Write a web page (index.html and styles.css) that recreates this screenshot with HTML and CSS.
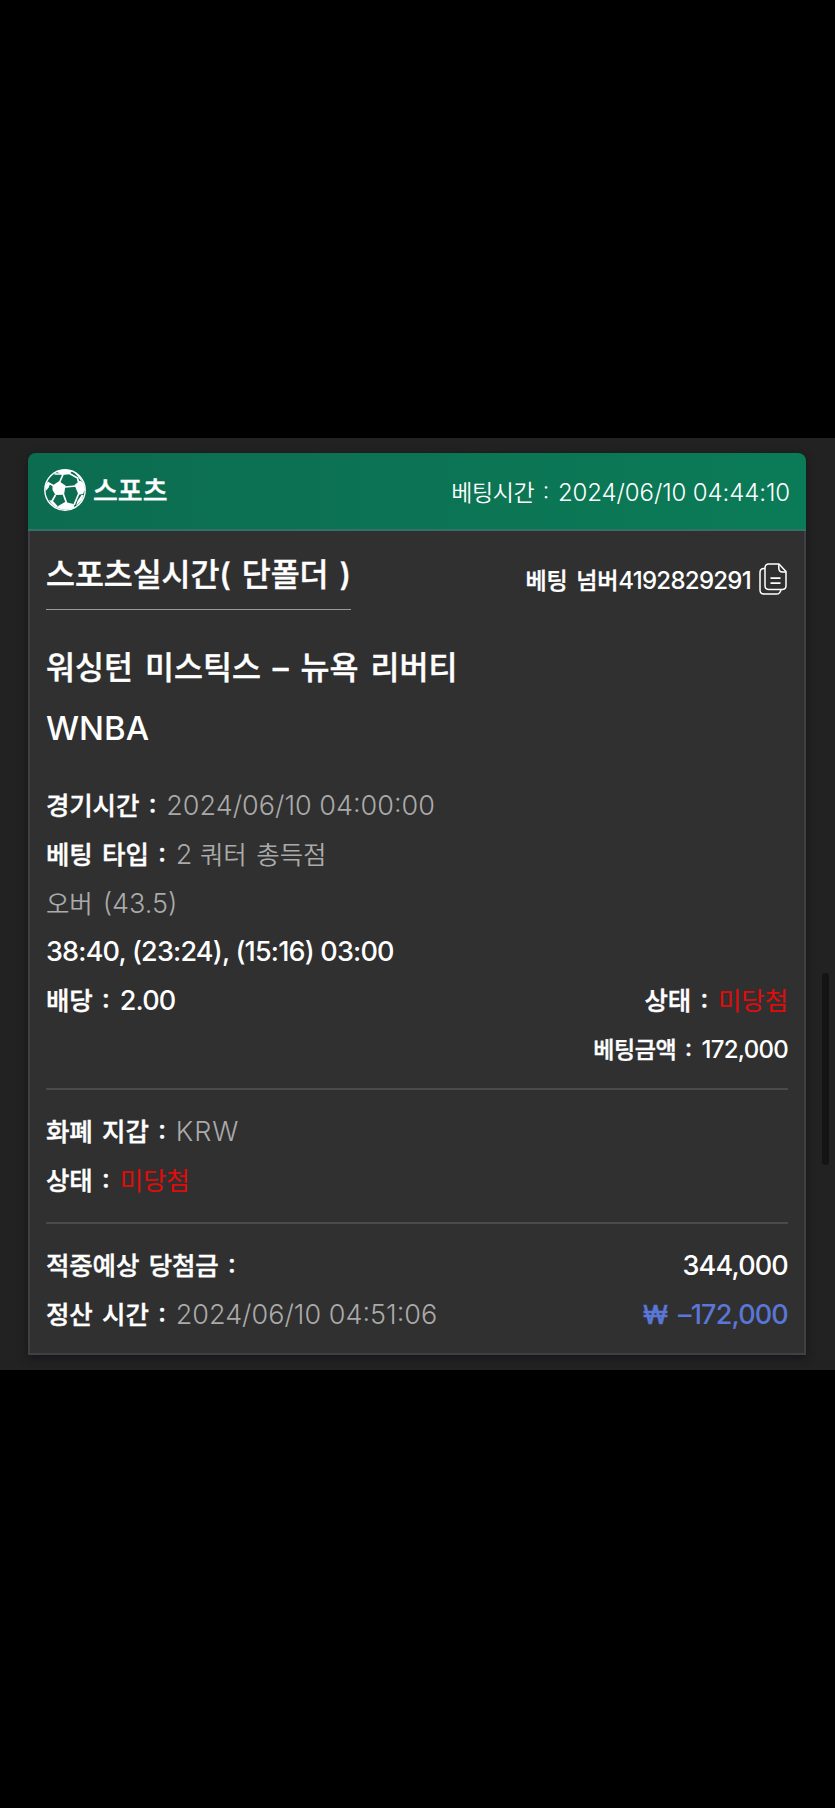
FILE: index.html
```
<!DOCTYPE html>
<html lang="ko">
<head>
<meta charset="utf-8">
<title>스포츠</title>
<link rel="stylesheet" href="styles.css">
</head>
<body>
<main class="sheet">
  <article class="card">
    <header class="head">
      <svg class="ball" viewBox="0 0 42 42">
        <circle cx="21" cy="21" r="20.200" fill="none" stroke="#fff" stroke-width="1.400"/>
        <g fill="#fff">
          <path d="M8.500 16.500l6.500-4.200 6.500 4.200-1.500 9.300-8.500.2-3-5z"/>
          <path d="M12 2.500Q20-1 28 2l-2.500 3.200-7 .8z"/>
          <path d="M30.500 16l5.500-4.500 3.500 2 1.500 7-2 4.500-4.500.7z"/>
          <path d="M1 16l3-3.500 2.200 2-1.500 4-3 3.500z"/>
          <path d="M5 31l4.500 1.500 4 4.500.5 2Q8 37 5 31z"/>
          <path d="M15 36.500l6-3.500 8.500 2 1 3.500Q22 43 13 38.500z"/>
          <path d="M29 2l7 5 3 6-3-2.500-3-4z"/>
          <path d="M39.500 26l-1.500 5-6 6 1.500-5 4-6z"/>
        </g>
        <path d="M15.500 13.500l3.500-8M10 17L4.500 14M21 18l11-1M19.500 25.500l3 8.500M11.500 26l-4 7M35 24l-5 12M25.500 4.500l8 4.500 1 4M19 5L10.500 5" fill="none" stroke="#fff" stroke-width="1.700"/>
      </svg>
      <span class="brand">스포츠</span>
      <div class="stamp"><span class="stamp-label">베팅시간 :</span><span>2024/06/10 04:44:10</span></div>
    </header>
    <section class="body">
      <div class="top">
        <h1 class="title">스포츠실시간( 단폴더 )</h1>
        <div class="number">
          <span class="k">베팅 넘버</span><span class="n">4192829291</span>
          <svg class="copy" viewBox="0 0 28 32" fill="none" stroke="#fff" stroke-width="1.500" stroke-linejoin="round">
            <path d="M6 5.500H5Q1 5.500 1 9.500V27Q1 31 5 31H17.500Q21 31 22 26.800"/>
            <path d="M10 1H20L27 8.500V22.500Q27 26.500 23 26.500H10Q6 26.500 6 22.500V5Q6 1 10 1Z"/>
            <path d="M19.800 1V5Q19.800 9 23.500 9H27"/>
            <path d="M11.500 15.200H21.500M11.500 20.200H21.500" stroke-width="1.800"/>
          </svg>
        </div>
      </div>
      <h2 class="match">워싱턴 미스틱스 – 뉴욕 리버티</h2>
      <h3 class="league">WNBA</h3>
      <div class="group">
        <div class="row"><span class="k">경기시간 :</span><span class="v">2024/06/10 04:00:00</span></div>
        <div class="row"><span class="k">베팅 타입 :</span><span class="v"><span>2</span> <span class="kv">쿼터 총득점</span></span></div>
        <div class="row"><span class="v kv">오버</span><span class="v odds">(43.5)</span></div>
        <div class="row"><span class="n score">38:40, (23:24), (15:16) 03:00</span></div>
        <div class="row"><span class="k">배당 :</span><span class="n">2.00</span><span class="k push">상태 :</span><span class="lost">미당첨</span></div>
        <div class="row small"><span class="k push">베팅금액 :</span><span class="n">172,000</span></div>
      </div>
      <hr class="line">
      <div class="group">
        <div class="row"><span class="k">화폐 지갑 :</span><span class="v wallet">KRW</span></div>
        <div class="row"><span class="k">상태 :</span><span class="lost">미당첨</span></div>
      </div>
      <hr class="line">
      <div class="group">
        <div class="row"><span class="k">적중예상 당첨금 :</span><span class="n push">344,000</span></div>
        <div class="row"><span class="k">정산 시간 :</span><span class="v">2024/06/10 04:51:06</span><span class="k push blue">₩</span><span class="n blue">–172,000</span></div>
      </div>
    </section>
  </article>
  <div class="thumb"></div>
</main>
</body>
</html>
```
FILE: styles.css
```
body {
  margin: 0;
  padding-top: 438px;
  background: #000;
  color: #fff;
  font-family: Inter, "Noto Sans CJK KR", sans-serif;
}
.sheet {
  position: relative;
  box-sizing: border-box;
  height: 932px;
  padding: 15px 28px;
  background: #222;
  overflow: hidden;
}
.card {
  width: 778px;
  height: 902px;
  box-sizing: border-box;
  display: flex;
  flex-direction: column;
  border-radius: 8px 8px 0 0;
  box-shadow: 0 3px 9px #16161b;
}
.head {
  box-sizing: border-box;
  height: 78px;
  padding: 0 16px;
  display: flex;
  align-items: center;
  border-bottom: 2px solid #337068;
  border-radius: 8px 8px 0 0;
  background: linear-gradient(90deg, #0c6c50, #0b7b57);
}
.ball {
  width: 42px;
  height: 42px;
  margin-top: -3px;
}
.brand {
  margin: -3px 0 0 7px;
  font-size: 27px;
  font-weight: 500;
  -webkit-text-stroke: .4px;
}
.stamp {
  display: flex;
  align-items: baseline;
  gap: 9px;
  margin: 0 0 0 auto;
  font-size: 24px;
  font-weight: 300;
  letter-spacing: -.1px;
}
.stamp-label {
  font-size: 23px;
  font-weight: 350;
  letter-spacing: -.4px;
  word-spacing: 2.500px;
  font-feature-settings: "case";
}
.body {
  flex: 1;
  box-sizing: border-box;
  padding: 14px 16px 0;
  border: 2px solid #404042;
  border-top: 0;
  background: #303030;
}
.top {
  display: flex;
  justify-content: space-between;
  align-items: flex-start;
}
.title, .match, .league {
  margin: 0;
  font-size: 31.500px;
  font-weight: 500;
  word-spacing: 2.700px;
  white-space: nowrap;
}
.title, .match { -webkit-text-stroke: .4px; }
.title {
  height: 64px;
  letter-spacing: -.1px;
  line-height: 59px;
  border-bottom: 1px solid #9a9a9a;
}
.number {
  display: flex;
  align-items: baseline;
  height: 49px;
  margin-top: 11px;
  font-size: 24px;
  line-height: 49px;
}
.number .k { font-size: 23px; }
.copy {
  align-self: flex-start;
  width: 28px;
  height: 32px;
  margin: 7px 1px 0 8px;
}
.match {
  height: 60px;
  margin-top: 28px;
  line-height: 60px;
  word-spacing: 3.600px;
}
.league {
  height: 60px;
  font-size: 33px;
  line-height: 60px;
}
.league + .group { margin-top: 23px; }
.row {
  display: flex;
  align-items: baseline;
  gap: 10px;
  height: 48.800px;
  font-size: 27px;
  line-height: 49px;
  white-space: nowrap;
}
.k, .kv, .lost {
  font-size: 25.500px;
  letter-spacing: -.15px;
  word-spacing: 2.800px;
}
.k {
  font-weight: 500;
  font-feature-settings: "case";
  -webkit-text-stroke: .4px;
}
.n {
  font-weight: 500;
  letter-spacing: -.03em;
}
.v {
  color: #aaa;
  font-weight: 300;
}
.kv { font-weight: 350; }
.lost {
  color: #e00c0c;
  font-weight: 400;
}
.wallet { letter-spacing: 1px; }
.push { margin-left: auto; }
.blue { color: #5a76d6; }
.small { font-size: 24px; }
.small .k {
  font-size: 23px;
  letter-spacing: -.4px;
}
.line {
  height: 2px;
  margin: 14px 0 17px;
  border: 0;
  background: #4a4a4a;
}
.group + .line ~ .line { margin-top: 18px; }
.thumb {
  position: absolute;
  left: 822px;
  top: 535px;
  width: 7px;
  height: 192px;
  border-radius: 4px;
  background: #141414;
}
```
